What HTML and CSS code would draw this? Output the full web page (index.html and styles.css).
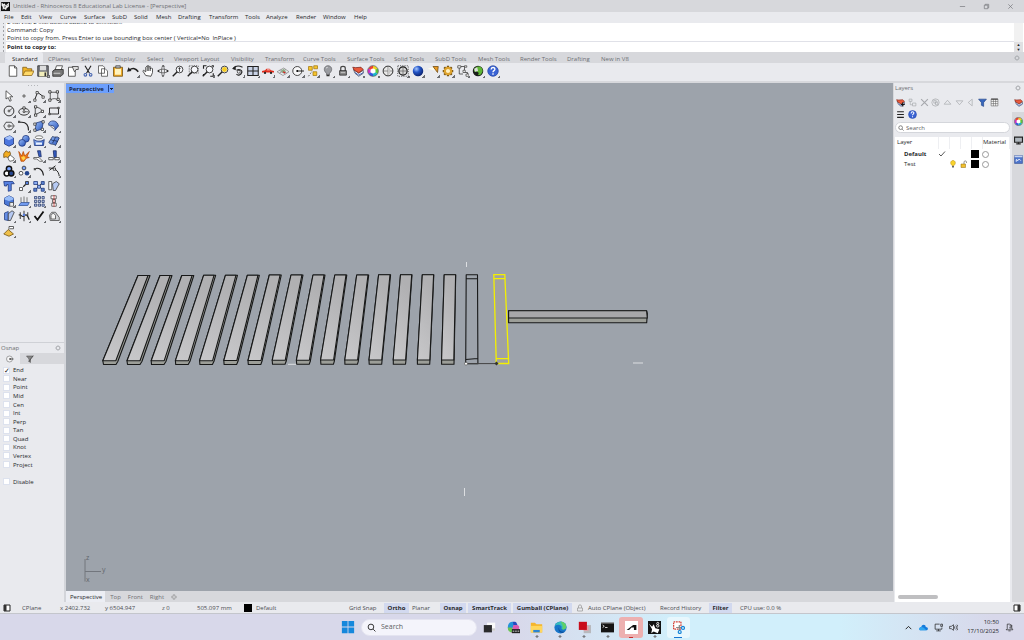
FILE: index.html
```html
<!DOCTYPE html>
<html lang="en">
<head>
<meta charset="utf-8">
<title>Untitled - Rhinoceros 8</title>
<link rel="stylesheet" href="styles.css">
</head>
<body>
<svg class="defs" aria-hidden="true">
  <linearGradient id="gBlue" x1="0" y1="0" x2="1" y2="1"><stop offset="0" stop-color="#9dc0fa"/><stop offset="1" stop-color="#2450b8"/></linearGradient>
  <radialGradient id="gBall" cx=".35" cy=".3" r=".8"><stop offset="0" stop-color="#a8c8ff"/><stop offset=".4" stop-color="#2456c8"/><stop offset="1" stop-color="#061a60"/></radialGradient>
  <symbol id="gear" viewBox="0 0 16 16"><circle cx="8" cy="8" r="4.500" fill="none" stroke="#aaacb0" stroke-width="2"/><path d="M8 0v3M8 13v3M0 8h3M13 8h3M2.500 2.500l2 2M11.500 11.500l2 2M2.500 13.500l2-2M11.500 4.500l2-2" stroke="#aaacb0" stroke-width="2"/></symbol>
  <symbol id="help" viewBox="0 0 16 16"><circle cx="8" cy="8" r="7" fill="#3a63d4" stroke="#2447a8"/><path d="M5.500 6c0-3.500 5-3.500 5-.5 0 2-2.500 2-2.500 4M8 11v2" fill="none" stroke="#fff" stroke-width="1.800"/></symbol>
  <symbol id="wheel" viewBox="0 0 16 16"><circle cx="8" cy="8" r="4" fill="#fff"/><g fill="none" stroke-width="3.600"><path d="M8 2.800a5.200 5.200 0 0 1 4.500 2.600" stroke="#f2d21c"/><path d="M12.500 5.400a5.200 5.200 0 0 1 0 5.200" stroke="#5cc83a"/><path d="M12.500 10.600A5.200 5.200 0 0 1 8 13.200" stroke="#18b8c8"/><path d="M8 13.200a5.200 5.200 0 0 1-4.500-2.600" stroke="#3058e0"/><path d="M3.500 10.600a5.200 5.200 0 0 1 0-5.200" stroke="#d030c8"/><path d="M3.500 5.400A5.200 5.200 0 0 1 8 2.800" stroke="#f04030"/></g><circle cx="8" cy="8" r="7.200" fill="none" stroke="#444" stroke-width=".8"/></symbol>
  <symbol id="layers" viewBox="0 0 16 16"><path d="M2 6l7 5 6-4v4l-6 4-5-4z" fill="#fff" stroke="#3a4055"/><path d="M4 10l5 3.500 6-3.500" fill="none" stroke="#3858b0" stroke-width="1.200"/><path d="M1 3l4 .5L12 3l3 3-6 4.500L3 7z" fill="#ea5a3c" stroke="#7c2218"/></symbol>
  <symbol id="lens" viewBox="0 0 16 16"><circle cx="10" cy="6" r="4.500" fill="#f5f6fa" stroke="#333" stroke-width="1.200"/><path d="M7 9l-6 6" stroke="#222" stroke-width="1.800"/></symbol>
  <symbol id="logo" viewBox="0 0 16 16"><path d="M0 0h16v16H0z" fill="#111"/><path d="M1 1l4 3 2-2 1 4 3-2 3-3v7l-4 3-1 3-4-2-2 2V9l-2-3z" fill="#f2f2f2"/><path d="M5 7l3 1-2 3M10 7l2-2" stroke="#111" fill="none"/></symbol>
</svg>

<header class="titlebar">
  <svg class="app-icon"><use href="#logo"/></svg>
  <h1 class="title">Untitled - Rhinoceros 8 Educational Lab License - [Perspective]</h1>
  <div class="window-buttons">
    <button aria-label="Minimise"><svg viewBox="0 0 16 16"><path d="M2 8h12"/></svg></button>
    <button aria-label="Restore"><svg viewBox="0 0 16 16"><path d="M3 5h8v8H3zM5 5V3h8v8h-2"/></svg></button>
    <button aria-label="Close"><svg viewBox="0 0 16 16"><path d="M3 3l10 10M13 3L3 13"/></svg></button>
  </div>
</header>

<nav class="menubar">
  <button>File</button><button>Edit</button><button>View</button><button>Curve</button><button>Surface</button><button>SubD</button><button>Solid</button><button>Mesh</button><button>Drafting</button><button>Transform</button><button>Tools</button><button>Analyze</button><button>Render</button><button>Window</button><button>Help</button>
</nav>

<section class="command">
  <div class="grip"></div>
  <div class="command-body">
    <div class="history">
      <p>2 curves, 2 extrusions added to selection.</p>
      <p>Command: Copy</p>
      <p>Point to copy from. Press Enter to use bounding box center ( Vertical=No&nbsp; InPlace )</p>
    </div>
    <label class="prompt">Point to copy to: <input type="text" aria-label="Command input"></label>
  </div>
  <div class="command-scroll"><span></span><button aria-label="Up">▲</button><button aria-label="Down">▼</button></div>
</section>

<nav class="tabs">
  <button class="active">Standard</button><button>CPlanes</button><button>Set View</button><button>Display</button><button>Select</button><button>Viewport Layout</button><button>Visibility</button><button>Transform</button><button>Curve Tools</button><button>Surface Tools</button><button>Solid Tools</button><button>SubD Tools</button><button>Mesh Tools</button><button>Render Tools</button><button>Drafting</button><button>New in V8</button>
  <button class="tab-options" aria-label="Options"><svg><use href="#gear"/></svg></button>
</nav>

<div class="toolbar">
  <button aria-label="New"><svg viewBox="0 0 16 16"><path d="M3 1h7l3 3v11H3z" fill="#fff" stroke="#333"/><path d="M10 1v3h3" fill="none" stroke="#333"/></svg></button>
  <button aria-label="Open"><svg viewBox="0 0 16 16"><path d="M1 14V3h5l1 2h6v3" fill="#f0b428" stroke="#7a5510"/><path d="M1 14l3-6h12l-3 6z" fill="#ffd968" stroke="#8a6015"/></svg></button>
  <button class="more" aria-label="Save"><svg viewBox="0 0 16 16"><path d="M1 1h14v14H1z" fill="#77797f" stroke="#222"/><path d="M4 1h8v6H4z" fill="#ddd"/><path d="M3 9h10v6H3z" fill="#f2eebb"/><path d="M10 10h2v5h-2z" fill="#333"/></svg></button>
  <button aria-label="Print"><svg viewBox="0 0 16 16"><path d="M4 7l2-6h8l-2 6" fill="#fff" stroke="#333"/><path d="M1 8l3-2h11v6l-3 3H1z" fill="#777" stroke="#222"/><path d="M2 11h9" stroke="#eee"/></svg></button>
  <button aria-label="Properties"><svg viewBox="0 0 16 16"><path d="M2 3h9v12H2z" fill="#fff" stroke="#333"/><path d="M7 2h8v4h-3l-2 3-1-2z" fill="#ddd" stroke="#333"/></svg></button>
  <button aria-label="Cut"><svg viewBox="0 0 16 16"><path d="M4 1l6 10M12 1L6 11" stroke="#222" stroke-width="1.500"/><circle cx="4.500" cy="13" r="1.800" fill="none" stroke="#4463b0" stroke-width="1.400"/><circle cx="11.500" cy="13" r="1.800" fill="none" stroke="#4463b0" stroke-width="1.400"/></svg></button>
  <button aria-label="Copy"><svg viewBox="0 0 16 16"><path d="M2 1h6l2 2v8H2zM6 5h5l3 3v7H6z" fill="#fff" stroke="#444"/></svg></button>
  <button aria-label="Paste"><svg viewBox="0 0 16 16"><path d="M2 3h12v12H2z" fill="#eda928" stroke="#6e4c0b"/><path d="M4 5h8v8H4z" fill="#fff3bd"/><path d="M5 1h6v3H5z" fill="#bbb" stroke="#444"/></svg></button>
  <button class="more" aria-label="Undo"><svg viewBox="0 0 16 16"><path d="M3 7c5-4 9-2 12 2" fill="none" stroke="#222" stroke-width="2"/><path d="M0 9l2-6 4 5z" fill="#222"/></svg></button>
  <button aria-label="Pan"><svg viewBox="0 0 16 16"><path d="M5 14L1 8l1-1 3 2V3l1-1 1 1V1h2v2l2-1v3l2-1 1 1v5l-2 5zM7 3v5M9 3v5M11 4v4" fill="#fff" stroke="#222"/></svg></button>
  <button aria-label="Rotate view"><svg viewBox="0 0 16 16"><ellipse cx="8" cy="8" rx="6" ry="2.500" fill="none" stroke="#555"/><ellipse cx="8" cy="8" rx="2" ry="6" fill="none" stroke="#555"/><path d="M6 2h5L8 0zM6 14h4l-2 2zM0 8l3-2v4zM16 8l-3-2v4z" fill="#222"/></svg></button>
  <button aria-label="Zoom dynamic"><svg viewBox="0 0 16 16"><use href="#lens"/><path d="M10 3v6M8.500 4.500h3" stroke="#222"/></svg></button>
  <button aria-label="Zoom window"><svg viewBox="0 0 16 16"><path d="M3 1h12v10H3z" fill="none" stroke="#444" stroke-dasharray="1.500"/><use href="#lens"/></svg></button>
  <button class="more" aria-label="Zoom extents"><svg viewBox="0 0 16 16"><use href="#lens"/><path d="M2 5V1h4M15 11v4h-4M13 1h2v2M2 12v2" fill="none" stroke="#222" stroke-width="1.500"/></svg></button>
  <button aria-label="Zoom selected"><svg viewBox="0 0 16 16"><use href="#lens"/><circle cx="10" cy="6" r="3.300" fill="#f6cc21"/></svg></button>
  <button class="more" aria-label="Undo view"><svg viewBox="0 0 16 16"><path d="M2 4c4-4 8-3 12-1M6 7c4-2 8 0 7 3s-5 5-7 2" fill="none" stroke="#222" stroke-width="1.500"/><path d="M0 5l5-4v6z" fill="#222"/><circle cx="9" cy="9" r="2" fill="none" stroke="#333"/></svg></button>
  <button class="more" aria-label="Viewports"><svg viewBox="0 0 16 16"><path d="M1 2h14v12H1z" fill="#c8d2e6" stroke="#222" stroke-width="1.400"/><path d="M8 2v12M1 8h14" stroke="#222" stroke-width="1.400"/></svg></button>
  <button class="more" aria-label="Named views"><svg viewBox="0 0 16 16"><path d="M0 10V8l4-1 2-2h4l2 2 4 1v2z" fill="#e02c1c"/><path d="M6 7l1-1h3l1 1z" fill="#fff"/><circle cx="4" cy="10.500" r="1.500" fill="#222"/><circle cx="12" cy="10.500" r="1.500" fill="#222"/></svg></button>
  <button class="more" aria-label="CPlane"><svg viewBox="0 0 16 16"><path d="M0 9l9-5 7 5-8 5zM3 7l8 5M5 6l8 5M3 11l9-5" fill="none" stroke="#888"/><path d="M5 8l4-3 3 4-4 2z" fill="#8cae86"/><path d="M8 9l3 1.500" stroke="#d22" stroke-width="1.500"/></svg></button>
  <button class="more" aria-label="Object snap"><svg viewBox="0 0 16 16"><circle cx="7" cy="8" r="6" fill="#f7f7f8" stroke="#444" stroke-width="1.300"/><path d="M7 8h9" stroke="#222" stroke-width="1.300"/><circle cx="7" cy="8" r="1.300"/></svg></button>
  <button class="more" aria-label="Select"><svg viewBox="0 0 16 16"><path d="M2 2h5v5H2zM9 1h5v4H9zM8 9h5v5H8z" fill="#f7c52c" stroke="#a47a12"/><path d="M2 15l5-7" stroke="#333" stroke-dasharray="2"/></svg></button>
  <button class="more" aria-label="Hide"><svg viewBox="0 0 16 16"><path d="M6 11C1 7 3 1 8 1s7 6 2 10v2H6z" fill="#9a9ca1" stroke="#606266"/><path d="M6 14h4" stroke="#333" stroke-width="2"/><path d="M5.500 4l2-1" stroke="#fff"/></svg></button>
  <button class="more" aria-label="Lock"><svg viewBox="0 0 16 16"><path d="M5 8V4c0-3 6-3 6 0v4" fill="none" stroke="#444" stroke-width="1.600"/><path d="M3.500 7.500h9v6h-9z" fill="#888" stroke="#222"/><path d="M5 10h6" stroke="#ccc"/></svg></button>
  <button class="more" aria-label="Layers"><svg><use href="#layers"/></svg></button>
  <button class="more" aria-label="Colour"><svg><use href="#wheel"/></svg></button>
  <button aria-label="Shade"><svg viewBox="0 0 16 16"><circle cx="8" cy="8" r="6.500" fill="#e8e8e8" stroke="#222" stroke-width="1.300"/><path d="M2 8h12M8 2v12" fill="none" stroke="#777"/><path d="M8 2c4 3 4 9 0 12" fill="#c6c6c6"/></svg></button>
  <button class="more" aria-label="Shade selected"><svg viewBox="0 0 16 16"><path d="M1 1h14v14H1z" fill="none" stroke="#333" stroke-dasharray="1.500"/><circle cx="8" cy="8" r="5.500" fill="#d4d4d4" stroke="#111" stroke-width="1.600"/><path d="M2 8h12M8 2v12" fill="none" stroke="#666"/></svg></button>
  <button class="more" aria-label="Render"><svg viewBox="0 0 16 16"><circle cx="8" cy="8" r="7" fill="url(#gBall)"/></svg></button>
  <button class="more" aria-label="Spotlight"><svg viewBox="0 0 16 16"><path d="M1 5l10-3 2 6z" fill="#fffbe8"/><path d="M8 2h7l-1 8z" fill="#eb9b22" stroke="#6b470d"/></svg></button>
  <button class="more" aria-label="Options"><svg viewBox="0 0 16 16"><path d="M8 1v14M1 8h14M3 3l10 10M3 13L13 3" stroke="#6e4b0c" stroke-width="3"/><circle cx="8" cy="8" r="4.300" fill="#fff0c0" stroke="#dda22c" stroke-width="3"/></svg></button>
  <button class="more" aria-label="History"><svg viewBox="0 0 16 16"><path d="M3 4v8h5M5 2h5v5M10 10h4v5" fill="none" stroke="#333"/><path d="M1 1h4v3H1zM10 1h3v2h-3zM8 7h3v3H8zM12 12h4v3h-4z" fill="#fff" stroke="#444"/></svg></button>
  <button class="more" aria-label="Grasshopper"><svg viewBox="0 0 16 16"><circle cx="8" cy="8" r="7" fill="#1b1f1b"/><path d="M8 2c4-1 7 3 6 7-2 5-5 5-6 4 3-3-2-5-5-4C2 5 4 3 8 2z" fill="#5fb636"/><path d="M3 5l4-2 1 5-4 1z" fill="#ddd"/></svg></button>
  <button class="more" aria-label="Help"><svg><use href="#help"/></svg></button>
</div>

<main class="workspace">
  <aside class="left">
    <div class="palette">
      <div class="palette-grip"></div>
      <div class="palette-grid">
        <button aria-label="Select"><svg viewBox="0 0 16 16"><path d="M4 1v11l3-2 2 5 2-1-2-5h4z" fill="#fff" stroke="#333"/></svg></button>
        <button class="more" aria-label="Point"><svg viewBox="0 0 16 16"><circle cx="8" cy="8" r="1.500" fill="#fff" stroke="#222"/></svg></button>
        <button class="more" aria-label="Polyline"><svg viewBox="0 0 16 16"><path d="M2 14L6 3l8 6" fill="none" stroke="#222" stroke-width="1.300"/><path d="M1 12h3v3H1zM4 2h3v3H4zM12 8h3v3h-3z" fill="#fff" stroke="#333"/></svg></button>
        <button class="more" aria-label="Curve"><svg viewBox="0 0 16 16"><path d="M2 3h11M3 3v10c4-2 7-2 10 0V3" fill="none" stroke="#333"/><path d="M1 1h3v3H1zM11 1h3v3h-3zM1 12h3v3H1zM12 11h3v3h-3z" fill="#fff" stroke="#222"/></svg></button>
        <button class="more" aria-label="Circle"><svg viewBox="0 0 16 16"><circle cx="8" cy="8" r="6.500" fill="none" stroke="#222" stroke-width="1.200"/><path d="M8 8l5-4" stroke="#333"/><circle cx="8" cy="8" r="1.300" fill="#fff" stroke="#222"/></svg></button>
        <button class="more" aria-label="Ellipse"><svg viewBox="0 0 16 16"><ellipse cx="8" cy="9" rx="7" ry="4.500" fill="none" stroke="#222" stroke-width="1.200"/><path d="M8 3v6h6" fill="none" stroke="#444"/><path d="M6.500 2.500h3v3h-3z" fill="#fff" stroke="#222"/><circle cx="8" cy="9" r="1.300" fill="#fff" stroke="#222"/></svg></button>
        <button class="more" aria-label="Arc"><svg viewBox="0 0 16 16"><path d="M3 3c5 0 8 2 10 6M3 3v10l10-5" fill="none" stroke="#222"/><path d="M2 1h3v3H2zM2 12h3v3H2zM11 7h3v3h-3z" fill="#fff" stroke="#222"/></svg></button>
        <button class="more" aria-label="Rectangle"><svg viewBox="0 0 16 16"><path d="M2 4h12v8H2z" fill="none" stroke="#222" stroke-width="1.200"/><path d="M1 11h2v2H1zM13 3h2v2h-2z" fill="#fff" stroke="#222"/></svg></button>
        <button class="more" aria-label="Polygon"><svg viewBox="0 0 16 16"><path d="M4 3h7l4 5-4 5H4L1 8z" fill="none" stroke="#222"/><circle cx="8" cy="8" r="1.500" fill="#fff" stroke="#222"/><path d="M9 8h5" stroke="#333"/></svg></button>
        <button class="more" aria-label="Fillet"><svg viewBox="0 0 16 16"><path d="M1 3h4c6 0 9 3 9 11" fill="none" stroke="#222" stroke-width="1.500"/><path d="M0 1h3v3H0z" fill="#555"/></svg></button>
        <button class="more" aria-label="Surface"><svg viewBox="0 0 16 16"><path d="M4 4l10-3-2 11-9 3z" fill="url(#gBlue)" stroke="#1b3474"/><path d="M1 4h3v3H1zM12 1h3v3h-3zM1 12h3v3H1zM11 11h3v3h-3z" fill="#fff" stroke="#333"/></svg></button>
        <button class="more" aria-label="Revolve"><svg viewBox="0 0 16 16"><path d="M1 4c4-5 12-3 13 4l-5 6c1-5-1-7-8-7z" fill="url(#gBlue)" stroke="#1b3474"/><path d="M3 8l5 4" stroke="#444"/></svg></button>
        <button class="more" aria-label="Box"><svg viewBox="0 0 16 16"><path d="M2 4l7-3 5 3v8l-6 3-6-3z" fill="#4c76df" stroke="#183078"/><path d="M2 4l7-3 5 3-6 3z" fill="#a5c2fb"/></svg></button>
        <button class="more" aria-label="Spheres"><svg viewBox="0 0 16 16"><circle cx="10.500" cy="5" r="4.500" fill="url(#gBlue)" stroke="#183078"/><circle cx="5.500" cy="10.500" r="4.500" fill="url(#gBlue)" stroke="#183078"/></svg></button>
        <button class="more" aria-label="Pipe"><svg viewBox="0 0 16 16"><ellipse cx="8" cy="3" rx="5" ry="2" fill="#fff" stroke="#555"/><path d="M1 6c4 3 10 3 14 0l-1 8H2z" fill="url(#gBlue)" stroke="#183078"/><path d="M4 10h8v3H4z" fill="#eaf2ff"/></svg></button>
        <button class="more" aria-label="Patch"><svg viewBox="0 0 16 16"><path d="M1 10l5-8c3 2 6-1 9 2l-5 10c-3-3-5 0-9-4z" fill="url(#gBlue)" stroke="#1b2c55"/><path d="M4 6c3 3 5 0 9 3M10 3L6 11" stroke="#1b2c55" fill="none"/></svg></button>
        <button class="more" aria-label="Boolean"><svg viewBox="0 0 16 16"><path d="M1 5l3-4 3 2 2-1 1 3-1 3-3 2-2-1-3 1z" fill="#f3ad22" stroke="#6f4807"/><path d="M7 9l3-2 5 4-1 3-5 1-2-3z" fill="#fff" stroke="#444"/></svg></button>
        <button aria-label="Explode"><svg viewBox="0 0 16 16"><path d="M1 2l4 6 2-6 2 6 6-6-3 7 3 1-4 1-3 4H4z" fill="#ef7c16" stroke="#b84a08"/><path d="M4 10l4-2 2 3-3 3z" fill="#ffd348"/></svg></button>
        <button class="more" aria-label="Trim"><svg viewBox="0 0 16 16"><path d="M6 1h4l1 8H8z" fill="#355cc0" stroke="#172a60"/><path d="M1 10h7l5 5h-4l-4-3H1z" stroke="#444" fill="#fff"/></svg></button>
        <button class="more" aria-label="Split"><svg viewBox="0 0 16 16"><path d="M7 1h4v9H8z" fill="#355cc0" stroke="#172a60"/><path d="M1 10h6v3H1zM9 10h6v3H9z" fill="#fff" stroke="#333"/></svg></button>
        <button class="more" aria-label="Group"><svg viewBox="0 0 16 16"><g stroke="#111" stroke-width="2"><circle cx="8" cy="5" r="3.500" fill="#80a8ff"/><circle cx="5" cy="11" r="3.500" fill="#fff"/><circle cx="11" cy="11" r="3.500" fill="#24458e"/></g></svg></button>
        <button class="more" aria-label="Ungroup"><svg viewBox="0 0 16 16"><circle cx="8" cy="4" r="2.500" fill="#80a8ff" stroke="#222"/><circle cx="4" cy="11" r="2.500" fill="#fff" stroke="#222"/><circle cx="12" cy="11" r="3" fill="#24458e"/></svg></button>
        <button aria-label="Edit curve"><svg viewBox="0 0 16 16"><path d="M2 5c6-2 11 1 12 9" fill="none" stroke="#222" stroke-width="1.500"/><path d="M1 4h3v3H1z" fill="#555"/></svg></button>
        <button class="more" aria-label="Extend curve"><svg viewBox="0 0 16 16"><path d="M1 4c8 0 13 3 14 11M2 7l8-6" fill="none" stroke="#222" stroke-width="1.300"/><path d="M7 4h3v3H7z" fill="#fff" stroke="#222"/></svg></button>
        <button aria-label="Text"><svg viewBox="0 0 16 16"><path d="M1 2h12l2 3h-4v9l-4 1V6H5v2H2z" fill="#5580e2" stroke="#183078"/></svg></button>
        <button class="more" aria-label="Move"><svg viewBox="0 0 16 16"><path d="M2 10h4v4H2z" fill="#fff" stroke="#333"/><path d="M10 2h4v4h-4z" fill="#537ddd" stroke="#222"/><path d="M7 9l3-3" stroke="#222" stroke-width="1.500"/></svg></button>
        <button class="more" aria-label="Copy objects"><svg viewBox="0 0 16 16"><path d="M5 5l7 7M4 12l8-8" stroke="#222"/><path d="M1 2h5v4H1zM6 7h4v4H6z" fill="#8bacf3" stroke="#1a347a"/><path d="M11 2h4v4h-4zM1 11h4v4H1zM11 11h4v4h-4z" fill="#5b82cf" stroke="#1a347a"/></svg></button>
        <button aria-label="Rotate"><svg viewBox="0 0 16 16"><path d="M1 2h4v11H1z" fill="#fff" stroke="#333"/><path d="M6 5l5-3 4 3-5 9H7z" fill="#b7cbf4" stroke="#333"/></svg></button>
        <button class="more" aria-label="Solid"><svg viewBox="0 0 16 16"><path d="M2 4l6-3 6 3v8l-6 3-6-3z" fill="#4b78d7" stroke="#183078"/><path d="M2 4l6-3 6 3v2l-6 2-6-2z" fill="#98bdf8"/><path d="M9 10h5v5H9z" fill="#eee" stroke="#444"/></svg></button>
        <button class="more" aria-label="Extrude"><svg viewBox="0 0 16 16"><path d="M1 14l3-4h11l-2 4z" fill="#719bf0" stroke="#315297"/><path d="M4 10V3M8 10V2M12 10V3" fill="none" stroke="#555"/></svg></button>
        <button class="more" aria-label="Array"><svg viewBox="0 0 16 16"><g fill="#b9caed" stroke="#26386a"><path d="M2 2h3v3H2zM7 2h3v3H7zM12 2h3v3h-3zM2 7h3v3H2zM7 7h3v3H7zM12 7h3v3h-3zM2 12h3v3H2zM7 12h3v3H7zM12 12h3v3h-3z"/></g></svg></button>
        <button class="more" aria-label="Align"><svg viewBox="0 0 16 16"><path d="M4 1h7v4H4zM6 6h4v4H6zM5 11h6v4H5z" fill="#fff" stroke="#444"/><path d="M8 0v16" stroke="#c93432"/></svg></button>
        <button class="more" aria-label="Bend"><svg viewBox="0 0 16 16"><path d="M2 4l5-2v12l-5-1z" fill="#658ee6" stroke="#213b7b"/><path d="M7 5l5-4 3 2-5 11H7z" fill="#b5c8f2" stroke="#333"/></svg></button>
        <button class="more" aria-label="Edit points"><svg viewBox="0 0 16 16"><path d="M1 7c3-3 4 4 7 1s4-2 7 5" fill="none" stroke="#222" stroke-width="1.500"/><path d="M8 1v14M3 3v9M13 3v6" stroke="#333" stroke-width="1.300"/><path d="M6.500 5h3v3h-3z" fill="#557de0"/></svg></button>
        <button class="more" aria-label="Check"><svg viewBox="0 0 16 16"><path d="M2 8l4 5L14 2" fill="none" stroke="#111" stroke-width="2.400"/></svg></button>
        <button class="more" aria-label="Clip"><svg viewBox="0 0 16 16"><path d="M2 7l3-4h5l5 7v4H3z" fill="#d1d3d7" stroke="#444"/><path d="M4 12V7l3-3 3 3v5z" fill="#f5f5f5" stroke="#444"/></svg></button>
        <button class="more" aria-label="Cone"><svg viewBox="0 0 16 16"><path d="M1 12l6-6 7 6-6 3z" fill="#efc04a" stroke="#6b4b0b"/><path d="M8 6V2h6v3H9" fill="#fff" stroke="#333"/></svg></button>
      </div>
    </div>
    <section class="osnap">
      <header class="panel-head"><h2>Osnap</h2><svg><use href="#gear"/></svg></header>
      <div class="osnap-tabs">
        <button class="active" aria-label="Snaps"><svg viewBox="0 0 16 16"><circle cx="7" cy="8" r="6" fill="#f5f5f6" stroke="#555"/><path d="M8 8h7" stroke="#222" stroke-width="1.500"/><circle cx="8" cy="8" r="1.500"/></svg></button>
        <button aria-label="Filter"><svg viewBox="0 0 16 16"><path d="M1 2h13L9 8v7l-3-2V8z" fill="#888" stroke="#444"/><path d="M15 1L5 14" stroke="#333"/></svg></button>
      </div>
      <div class="snap-list">
        <label><input type="checkbox" checked>End</label>
        <label><input type="checkbox">Near</label>
        <label><input type="checkbox">Point</label>
        <label><input type="checkbox">Mid</label>
        <label><input type="checkbox">Cen</label>
        <label><input type="checkbox">Int</label>
        <label><input type="checkbox">Perp</label>
        <label><input type="checkbox">Tan</label>
        <label><input type="checkbox">Quad</label>
        <label><input type="checkbox">Knot</label>
        <label><input type="checkbox">Vertex</label>
        <label><input type="checkbox">Project</label>
        <label class="disable"><input type="checkbox">Disable</label>
      </div>
    </section>
  </aside>

  <section class="center">
    <div class="viewport">
      <button class="view-title"><span>Perspective</span><i></i></button>
      <svg class="scene" viewBox="66 83 827 508" preserveAspectRatio="xMinYMin meet">
        <defs><linearGradient id="gTop" x1="0" y1="1" x2=".3" y2="0"><stop offset="0" stop-color="#c8c8ca"/><stop offset="1" stop-color="#b0b0b2"/></linearGradient></defs>
        <path class="tick" d="M466.500 262v5M464.500 488v8M633 363h10M288 364.300h9"/>
        <g class="bars">
          <path class="side" d="M138 275.500h12L117.800 361.500 116 364.500h-12.500L102.800 360.700z"/><path class="top" d="M138 275.500h10L115.800 360.700h-13z"/>
          <path class="side" d="M160 275.500h12L141.900 361.500 140 364.500h-12.500L127 360.700z"/><path class="top" d="M160 275.500h10.100L140 360.700h-13z"/>
          <path class="side" d="M181.800 275.500h12L165.900 361.500 164 364.500h-12.500L151.200 360.700z"/><path class="top" d="M181.800 275.500h10.300L164.200 360.700h-13z"/>
          <path class="side" d="M203.700 275.200h12L190 361.300 188.200 364.500h-12.500L175.400 360.700z"/><path class="top" d="M203.700 275.200h10.400L188.400 360.700h-13z"/>
          <path class="side" d="M225.500 275.200h12L214 361.300 212.400 364.500h-12.500L199.600 360.700z"/><path class="top" d="M225.500 275.200h10.500L212.600 360.700h-13z"/>
          <path class="side" d="M247.400 275.200h12L238 361.300 236.600 364.500h-12.500L223.800 360.500z"/><path class="top" d="M247.400 275.200h10.600L236.800 360.500h-13z"/>
          <path class="side" d="M269.300 275h12L262 361.300 260.800 364.500h-12.500L248 360.500z"/><path class="top" d="M269.300 275h10.800L261 360.500h-13z"/>
          <path class="side" d="M291 275h12L286.200 361.300 285 364.300h-12.500L272.200 360.300z"/><path class="top" d="M291 275h10.900L285.200 360.300h-13z"/>
          <path class="side" d="M313 275h12L310.300 361.300 309.200 364.300h-12.500L296.400 360.200z"/><path class="top" d="M313 275h11L309.400 360.200h-13z"/>
          <path class="side" d="M334.800 275h12L334.300 361.300 333.400 364.300h-12.500L320.600 360z"/><path class="top" d="M334.800 275h11.200L333.600 360h-13z"/>
          <path class="side" d="M356.700 275h12L358.300 361.300 357.400 364.300h-12.500L344.800 360z"/><path class="top" d="M356.700 275h11.300L357.600 360h-12.800z"/>
          <path class="side" d="M378.600 274.800h12L382 361 381.700 364.300h-12.500L369 360z"/><path class="top" d="M378.600 274.800h11.400L381.700 360h-12.700z"/>
          <path class="side" d="M400.500 274.800h11.500L405.900 361 405.500 364.200h-12.200V360z"/><path class="top" d="M400.500 274.800h11.200L405.600 360h-12.400z"/>
          <path class="side" d="M422.300 274.800h11.500L429.900 361 429.700 364.200h-12.300V360z"/><path class="top" d="M422.300 274.800h11.300L429.800 360h-12.400z"/>
          <path class="side" d="M444.200 274.700h11.500L454 364.200h-12.400V360z"/><path class="top" d="M444.200 274.700h11.400L453.800 360h-12.200z"/>
          <path class="wire" d="M466.200 274.700h11.300l.4 89H465.700zM466.200 278.700h11.400M465.700 359.500l12-1"/>
          <path class="side" d="M508.600 310.700h138l.7 3-.6 9H508.600z"/><path class="long" d="M508.600 310.700h138l.7 7.300H508.600z"/>
        </g>
        <path d="M494 274.700h10.800l4 88.800H496.200z" fill="#a0a1a4"/>
        <path d="M466 363.600h30" stroke="#444"/>
        <path class="selected" d="M493.800 274.700h11l3.900 88.800H496.300zM494 278.700h11M496.200 358.700h12.200"/>
        <circle cx="466" cy="363.700" r="1.500" fill="#fff" stroke="#444" stroke-width=".6"/><path d="M494.500 363.600l2-2 2 2-2 2z" fill="#333"/>
        <path class="axis" d="M85 559v22.500M85 571.500h16"/>
        <text x="86" y="560">z</text><text x="102" y="572">y</text><text x="86" y="582">x</text>
      </svg>
    </div>
    <nav class="view-tabs"><button class="active">Perspective</button><button>Top</button><button>Front</button><button>Right</button><button aria-label="Add view"><svg viewBox="0 0 16 16"><path d="M6 6V2h4v4h4v4h-4v4H6v-4H2V6z" fill="none" stroke="#888" stroke-width="1.500"/></svg></button></nav>
  </section>

  <aside class="right">
    <section class="layers">
      <header class="panel-head"><h2>Layers</h2></header>
      <div class="layer-tools">
        <button aria-label="New layer"><svg viewBox="0 0 16 16"><use href="#layers"/><path d="M12 8v7M8.500 11.500h7" stroke="#111" stroke-width="2"/></svg></button>
        <button class="dim" aria-label="New sublayer"><svg viewBox="0 0 16 16"><path d="M2 2h5v4H2zM4 6v6h4M8 9h6v5H8z"/></svg></button>
        <button class="dim" aria-label="Delete"><svg viewBox="0 0 16 16"><path d="M2 2l12 12M14 2L2 14" stroke-width="2"/></svg></button>
        <button class="dim" aria-label="Duplicate"><svg viewBox="0 0 16 16"><circle cx="8" cy="8" r="6.500"/><path d="M5 4h4v5H5zM8 7h4v5H8z"/></svg></button>
        <button class="dim" aria-label="Up"><svg viewBox="0 0 16 16"><path d="M2 11h12L8 4z"/></svg></button>
        <button class="dim" aria-label="Down"><svg viewBox="0 0 16 16"><path d="M2 5h12l-6 7z"/></svg></button>
        <button class="dim" aria-label="Left"><svg viewBox="0 0 16 16"><path d="M11 2v12L4 8z"/></svg></button>
        <button aria-label="Filter"><svg viewBox="0 0 16 16"><path d="M1 2h14l-5 6v7l-4-2V8z" fill="#3766bd" stroke="#183a7d"/></svg></button>
        <button aria-label="Columns"><svg viewBox="0 0 16 16"><path d="M2 2h12v12H2zM2 6h12M2 10h12M6 2v12M10 2v12" fill="#fff" stroke="#555"/><path d="M2 1h12v2H2z" fill="#444"/></svg></button>
        <button aria-label="Menu"><svg viewBox="0 0 16 16"><path d="M2 3h12M2 8h12M2 13h12" stroke="#222" stroke-width="2"/></svg></button>
        <button aria-label="Help"><svg><use href="#help"/></svg></button>
      </div>
      <label class="search"><svg viewBox="0 0 16 16"><circle cx="7" cy="7" r="5" fill="none" stroke="#333" stroke-width="1.500"/><path d="M11 11l4 4" stroke="#333" stroke-width="1.500"/></svg><input type="search" placeholder="Search" aria-label="Search layers"></label>
      <div class="layer-body">
        <table>
          <colgroup><col class="c-name"><col class="c-icon"><col class="c-icon"><col class="c-icon"><col class="c-icon"><col></colgroup>
          <thead><tr><th>Layer</th><th></th><th></th><th></th><th></th><th class="mat">Material</th></tr></thead>
          <tbody>
            <tr><td class="current">Default</td><td><svg viewBox="0 0 16 16"><path d="M2 8l4 4 8-9" fill="none" stroke="#222" stroke-width="1.500"/></svg></td><td></td><td></td><td><span class="swatch"></span></td><td><span class="ring"></span></td></tr>
            <tr><td>Test</td><td></td><td><svg viewBox="0 0 16 16"><path d="M6 11C1 6 4 1 8 1s7 5 2 10z" fill="#f8d32c" stroke="#b48508"/><path d="M6 12h4v3H6z" fill="#666"/></svg></td><td><svg viewBox="0 0 16 16"><path d="M8 8V4c0-3 5-3 5 0v2" fill="none" stroke="#777" stroke-width="1.500"/><path d="M2 8h9v7H2z" fill="#f2c02c" stroke="#8b6913"/></svg></td><td><span class="swatch"></span></td><td><span class="ring"></span></td></tr>
          </tbody>
        </table>
        <div class="hscroll"></div>
      </div>
    </section>
    <nav class="side-tabs">
      <svg class="side-gear"><use href="#gear"/></svg>
      <button class="active" aria-label="Layers"><svg><use href="#layers"/></svg></button>
      <button aria-label="Materials"><svg><use href="#wheel"/></svg></button>
      <button aria-label="Display"><svg viewBox="0 0 16 16"><path d="M1 2h14v9H1z" fill="#aeb6bd" stroke="#222" stroke-width="2"/><path d="M8 11v3M4 14h8" stroke="#222" stroke-width="2"/></svg></button>
      <button aria-label="Help panel"><svg viewBox="0 0 16 16"><path d="M1 1h14v14H1z" fill="#4d75cc" stroke="#2b468c"/><path d="M1 1h14v3H1z" fill="#c7d4ef"/><path d="M4 12V8l3 2 2-3 3 3" fill="none" stroke="#fff" stroke-width="1.500"/></svg></button>
    </nav>
  </aside>
</main>

<footer class="status">
  <button class="pane" aria-label="Left sidebar"><svg viewBox="0 0 16 16"><path d="M2 2h12v12H2z" fill="#fff" stroke="#222" stroke-width="2"/><path d="M2 2h5v12H2z" fill="#333"/></svg></button>
  <span>CPlane</span><span>x 2402.732</span><span>y 6504.947</span><span>z 0</span><span>505.097 mm</span>
  <span class="layer"><i class="swatch"></i>Default</span>
  <button>Grid Snap</button><button class="on">Ortho</button><button>Planar</button><button class="on">Osnap</button><button class="on">SmartTrack</button><button class="on">Gumball (CPlane)</button>
  <button class="auto"><svg viewBox="0 0 16 16"><path d="M5 8V4c0-3 6-3 6 0v4M3 8h10v6H3z" fill="none" stroke="#999" stroke-width="1.500"/></svg>Auto CPlane (Object)</button>
  <button>Record History</button><button class="on">Filter</button><span class="cpu">CPU use: 0.0 %</span>
  <button class="pane" aria-label="Right sidebar"><svg viewBox="0 0 16 16"><path d="M2 2h12v12H2z" fill="#fff" stroke="#222" stroke-width="2"/><path d="M9 2h5v12H9z" fill="#333"/></svg></button>
</footer>

<footer class="taskbar">
  <div class="task-center">
    <button class="start" aria-label="Start"><svg viewBox="0 0 16 16"><path d="M1 1h6.500v6.500H1zM8.500 1H15v6.500H8.500zM1 8.500h6.500V15H1zM8.500 8.500H15V15H8.500z" fill="#1688dc"/></svg></button>
    <label class="task-search"><svg viewBox="0 0 16 16"><circle cx="7" cy="7" r="5" fill="none" stroke="#222" stroke-width="1.600"/><path d="M11 11l4 4" stroke="#222" stroke-width="1.600"/></svg><input type="search" placeholder="Search" aria-label="Search Windows"></label>
    <div class="apps">
      <button aria-label="Task view"><svg viewBox="0 0 16 16"><path d="M5 2h10v10H5z" fill="#fafafa"/><path d="M1 5h10v9H1z" fill="#2a2a2c"/><path d="M11 12h4V9h-4z" fill="#ccc"/></svg></button>
      <button aria-label="Copilot"><svg viewBox="0 0 16 16"><path d="M1 8c0-4 2-7 6-7l2 4-4 7C2 12 1 10 1 8z" fill="#2493d8"/><path d="M7 1h3c2 0 2 3 3 4H8z" fill="#244bc0"/><path d="M8 5h5c3 1 2 4 1 7L9 14H5z" fill="#d95bb0"/><path d="M1 8h5l2 4-3 2c-3-1-4-3-4-6z" fill="#6cc451"/><path d="M6 10h10v5H6z" fill="#222"/><path d="M7 12.500h8" stroke="#fff" stroke-dasharray="2 1"/></svg></button>
      <button class="running" aria-label="Explorer"><svg viewBox="0 0 16 16"><path d="M1 14V2h5l2 2h7v10z" fill="#f5b52d"/><path d="M1 6h14v8H1z" fill="#ffd75e"/><path d="M4 11h8v3H4z" fill="#2b84d2"/></svg></button>
      <button class="running" aria-label="Edge"><svg viewBox="0 0 16 16"><circle cx="8" cy="8" r="7.500" fill="#1876c9"/><path d="M1 6c2-7 14-7 14 1 0 4-5 4-6 2 2-4-4-6-8-3z" fill="#36bdbd"/><path d="M8 1c5 0 7 3 7 6 0 3-3 4-5 3 2-3 0-6-2-9z" fill="#5fcf6a"/><path d="M6 8c0 4 3 6 8 5-5 4-10 0-8-5z" fill="#0e4f9c"/></svg></button>
      <button class="running" aria-label="Remote"><svg viewBox="0 0 16 16"><path d="M7 5h9v10H7z" fill="#b8b9bd"/><path d="M1 1h10v10H1z" fill="#c90c1b"/><path d="M11 6h2v6H7v-1h4z" fill="#e5a0a6"/></svg></button>
      <button class="running" aria-label="Terminal"><svg viewBox="0 0 16 16"><path d="M0 2h16v12H0z" fill="#151515"/><path d="M0 2h16v1H0z" fill="#aaa"/><path d="M2 5l2 1.500L2 8M5 8h3" fill="none" stroke="#fff"/></svg></button>
      <button class="running alert" aria-label="Autodesk"><svg viewBox="0 0 16 16"><path d="M0 0h16v16H0z" fill="#fff"/><path d="M2 11l8-6h4v6h-3V8H8l-3 3z" fill="#111"/></svg></button>
      <button class="running" aria-label="Rhino 8"><svg viewBox="0 0 16 16"><path d="M0 0h16v16H0z" fill="#111"/><path d="M1 3l4 4 2-3 2 5 5 1-2 5-5-2-3 2 1-5z" fill="#fff"/><circle cx="12" cy="3" r="1.300" fill="none" stroke="#fff"/><circle cx="12" cy="6" r="1.500" fill="none" stroke="#fff"/></svg></button>
      <button class="running focused" aria-label="Snipping Tool"><svg viewBox="0 0 16 16"><path d="M2 1h9v9H2z" fill="#fff" stroke="#d33c32" stroke-width="1.500" stroke-dasharray="2 1"/><path d="M9 5v7M5 8h7" stroke="#888" stroke-width="1.500"/><circle cx="13.500" cy="8.500" r="1.800" fill="none" stroke="#1684d8" stroke-width="1.500"/><circle cx="9.500" cy="13.500" r="1.800" fill="none" stroke="#1684d8" stroke-width="1.500"/></svg></button>
    </div>
  </div>
  <div class="tray">
    <button aria-label="Hidden icons"><svg viewBox="0 0 16 16"><path d="M3 11l5-5 5 5" fill="none" stroke="#222" stroke-width="1.700"/></svg></button>
    <button class="cloud" aria-label="OneDrive"><svg viewBox="0 0 16 16"><path d="M3 13C-1 13 0 7 4 7c1-5 8-5 8 0 5 0 5 6 1 6z" fill="#137bdc"/><path d="M4 7c3 0 6 2 9 6H3c-4 0-3-6 1-6z" fill="#32a7f0"/></svg></button>
    <button aria-label="Network"><svg viewBox="0 0 16 16"><path d="M10 2H2v9h12V8M8 11v3M4 14h8M12 2h3v4h-3z" fill="none" stroke="#222" stroke-width="1.300"/></svg></button>
    <button aria-label="Volume"><svg viewBox="0 0 16 16"><path d="M1 6h3l4-3v10l-4-3H1zM10 6v4M12 4.500c2 2 2 5 0 7M14 3c3 3 3 7 0 10" fill="none" stroke="#222" stroke-width="1.200"/></svg></button>
    <button class="clock"><time>10:50</time><time>17/10/2025</time></button>
    <button aria-label="Notifications"><svg viewBox="0 0 16 16"><path d="M2 12h12l-2-3V4L8 2H4v8zM6 14h4M8 5h4l-4 4h4" fill="none" stroke="#222" stroke-width="1.200"/></svg></button>
  </div>
</footer>
</body>
</html>
```
FILE: styles.css
```css
* { box-sizing: border-box; }
body {
  margin: 0;
  height: 100vh;
  display: flex;
  flex-direction: column;
  overflow: hidden;
  background: #e9eaee;
  color: #26272a;
  font: 6px/8px "Open Sans", "Noto Sans", sans-serif;
}
button, input { font: inherit; color: inherit; border: 0; margin: 0; padding: 0; background: none; }
button { display: flex; align-items: center; white-space: nowrap; text-align: left; }
input { min-width: 0; outline: 0; }
svg { display: block; flex: none; width: 12px; height: 12px; }
h1, h2, p { margin: 0; font: inherit; }
.defs { position: absolute; width: 0; height: 0; }

.titlebar { display: flex; align-items: center; gap: 3px; height: 12px; flex: none; padding: 0 2px 0 1px; background: #d7d8dc; color: #6d6f73; }
.app-icon { width: 9px; height: 9px; }
.title { flex: 1; }
.window-buttons { display: flex; }
.window-buttons button { width: 24px; height: 12px; justify-content: center; }
.window-buttons svg { width: 7px; height: 7px; fill: none; stroke: #77797d; stroke-width: 1.600; }

.menubar { display: grid; grid-template-columns: 17px 18px 21px 24px 28px 22px 22px 22px 31px 36px 21px 30px 27px 31px 30px; height: 11px; flex: none; padding: 0 0 2px 4px; }

.command { display: flex; height: 29px; flex: none; background: #fff; }
.grip { width: 6px; background: radial-gradient(#a0a2a6 1px, transparent 1px) 2px 10px / 3px 4px repeat-y, #e9eaee; }
.command-body { flex: 1; display: flex; flex-direction: column; }
.history { height: 19px; display: flex; flex-direction: column; justify-content: flex-end; overflow: hidden; padding: 0 1px; border-bottom: 1px solid #e0e1e8; }
.history p { flex: none; }
.history p:last-child { margin-bottom: -1px; }
.prompt { flex: 1; display: flex; align-items: center; gap: 3px; padding: 0 0 1px 1px; font-weight: 700; }
.prompt input { flex: 1; }
.command-scroll { width: 10px; display: flex; flex-direction: column; background: #fff; padding-right: 1px; }
.command-scroll span { flex: 1; background: #f1f1f1; }
.command-scroll button { height: 5px; justify-content: center; font-size: 4px; background: #e0e0e2; }

.tabs { display: grid; grid-template-columns: 38px 33px 34px 32px 27px 57px 34px 38px 44px 47px 41px 43px 42px 47px 34px 34px 1fr; height: 11px; flex: none; padding-left: 5px; background: #d7d8dc; color: #6d6f73; }
.tabs button { padding: 2px 5px 0; }
.tabs .active { background: #e9eaee; color: #26272a; padding-left: 7px; border-radius: 2px 2px 0 0; }
.tabs .tab-options { justify-content: flex-end; padding: 0 4px; }
.tab-options svg { width: 6px; height: 6px; }

.toolbar { display: flex; height: 20px; flex: none; padding: 0 0 4px 5px; border-bottom: 2px solid #d7d8dc; }
.toolbar button, .palette-grid button { width: 15px; height: 15px; justify-content: center; }
.more { background: linear-gradient(135deg, transparent 50%, #6b6d71 50%) right bottom / 3px 3px no-repeat; }

.workspace { flex: 1; min-height: 0; display: flex; }
.left { width: 66px; flex: none; display: flex; flex-direction: column; border-right: 2px solid #d3d5da; }
.palette { flex: 1; }
.palette-grip { height: 5px; width: 38px; padding: 1px 0 1px 26px; background: radial-gradient(#b4b6ba 1px, transparent 1px) 24px 1px / 3px 3px; background-clip: content-box; }
.palette-grid { display: grid; grid-template-columns: repeat(4, 15px); padding-left: 1px; }
.osnap { height: 260px; border-top: 1px solid #cfd1d6; }
.panel-head { display: flex; align-items: center; justify-content: space-between; height: 10px; color: #6d6f73; padding: 0 3px 0 1px; }
.panel-head svg { width: 6px; height: 6px; }
.osnap-tabs { display: flex; height: 11px; background: #d7d8dc; }
.osnap-tabs button { width: 20px; justify-content: center; }
.osnap-tabs .active { background: #e9eaee; }
.osnap-tabs svg { width: 8px; height: 8px; }
.snap-list { display: grid; grid-template-rows: repeat(14, 1fr); height: 122px; padding-top: 2px; }
.snap-list label { display: flex; align-items: center; gap: 3px; min-height: 0; }
.snap-list .disable { grid-row: 14; }
.snap-list input { appearance: none; width: 7px; height: 7px; margin-left: 3px; background: #fff; border: 1px solid #dde2ee; display: grid; place-items: center; }
.snap-list input:checked::before { content: "✓"; font: bold 7px/7px "DejaVu Sans", sans-serif; color: #111; }

.center { flex: 1; min-width: 0; display: flex; flex-direction: column; }
.viewport { flex: 1; min-height: 0; position: relative; background: #9da3ab; overflow: hidden; }
.view-title { position: absolute; top: 1px; left: 0; height: 9px; padding-left: 3px; gap: 4px; background: #6c9ffc; color: #16233f; font-weight: 700; }
.view-title i { width: 6px; height: 7px; border-left: 1px solid #26468b; background: linear-gradient(#16233f, #16233f) 1px 3px / 3px 1px no-repeat, linear-gradient(#16233f, #16233f) 2px 4px / 1px 1px no-repeat; }
.scene { width: 100%; height: 100%; font: 7px "Open Sans", sans-serif; fill: #62666d; }
.bars path { stroke: #171818; stroke-width: 1.100; stroke-linejoin: round; }
.bars .side { fill: #9c9e98; }
.bars .top { fill: url(#gTop); }
.bars .wire { fill: none; }
.bars .long { fill: #a7a7a9; }
.tick { stroke: #dcdee1; }
.axis { stroke: #72767d; }
.selected { fill: none; stroke: #f4f000; stroke-width: 1.300; }
.view-tabs { display: flex; height: 11px; flex: none; background: #d7d8dc; color: #6d6f73; gap: 7px; }
.view-tabs .active { background: #eceef4; color: #26272a; padding: 0 3px 0 4px; margin-right: -2px; }
.view-tabs svg { width: 6px; height: 6px; }

.right { width: 131px; flex: none; display: flex; border-left: 1px solid #d7d8dc; }
.layers { flex: 1; min-width: 0; display: flex; flex-direction: column; padding-left: 1px; }
.layers .panel-head { padding-left: 0; }
.layer-tools { display: grid; grid-template-columns: repeat(9, 1fr); grid-auto-rows: 12px; padding: 3px 12px 0 0; }
.layer-tools button { justify-content: center; }
.layer-tools svg { width: 9px; height: 9px; }
.dim svg { fill: none; stroke: #a6a8ac; stroke-width: 1.200; }
.search { display: flex; align-items: center; gap: 2px; height: 11px; margin: 2px 2px 4px 0; padding: 0 2px; border: 1px solid #d4d6db; border-radius: 6px; background: #fff; }
.search svg { width: 6px; height: 6px; }
.search input, .task-search input { flex: 1; width: 0; }
input::placeholder { color: #5c5e62; opacity: 1; }
.layer-body { flex: 1; display: flex; flex-direction: column; justify-content: space-between; background: #fff; margin-right: 2px; }
table { width: 100%; border-collapse: collapse; table-layout: fixed; }
.c-name { width: 43px; }
.c-icon { width: 11px; }
th { height: 12px; padding: 0 0 2px 2px; text-align: left; font-weight: 400; border-right: 1px solid #eeeff2; }
th.mat { padding: 0 3px 2px 0; text-align: right; }
td { height: 10px; padding: 0; }
td:first-child { padding-left: 9px; }
td svg { width: 8px; height: 8px; }
.current { font-weight: 700; }
.swatch { display: block; width: 8px; height: 8px; background: #000; }
.ring { display: block; width: 7px; height: 7px; border: 1px solid #999; border-radius: 50%; }
.hscroll { width: 40px; height: 4px; margin: 0 0 3px 3px; border-radius: 2px; background: #bfbfc1; }
.side-tabs { width: 12px; background: #d7d8dc; display: flex; flex-direction: column; }
.side-tabs .side-gear { width: 12px; height: 10px; padding: 2px 3px; background: #e9eaee; }
.side-tabs button { height: 19px; justify-content: center; }
.side-tabs .active { background: #e9eaee; }
.side-tabs button svg { width: 9px; height: 9px; }

.status { display: grid; grid-template-columns: 22px 38px 45px 57px 35px 47px 102px 38px 25px 31px 26px 45px 61px 85px 52px 23px 1fr 14px; height: 12px; flex: none; align-items: center; border-bottom: 1px solid #c4c6cc; color: #4b4d52; }
.status button { height: 10px; padding: 0 3px; }
.status .on { justify-content: center; padding: 0; background: #d2d9ef; color: #26272a; font-weight: 700; }
.status .on + .on { border-left: 2px solid #e9eaee; }
.status .layer { display: flex; align-items: center; gap: 4px; }
.status svg { width: 8px; height: 8px; }
.status .auto { gap: 4px; padding-left: 4px; }
.status .pane { padding: 0 3px; }
.cpu { padding-left: 8px; }

.taskbar { display: grid; grid-template-columns: 1fr auto 1fr; height: 26px; flex: none; align-items: center; background: linear-gradient(90deg, #d8d8ea 50%, #d1effb 66%, #d1effb 82%, #d8d8ea 97%); }
.task-center { grid-column: 2; display: flex; align-items: center; height: 26px; }
.start { width: 27px; height: 20px; justify-content: center; }
.start svg { width: 14px; height: 14px; }
.task-search { display: flex; align-items: center; gap: 5px; width: 116px; height: 17px; margin-right: 1px; padding: 0 5px; border-radius: 9px; background: #f4f4fb; border: 1px solid #e4e4f0; font-size: 7px; }
.task-search svg { width: 9px; height: 9px; }
.apps { display: flex; width: 212px; }
.apps button { flex: 1; height: 21px; justify-content: center; border-radius: 3px; }
.apps svg { width: 13px; height: 13px; }
.apps .running { background: radial-gradient(#77797d 1px, transparent 2px) center bottom / 4px 3px no-repeat; }
.apps .alert { background: linear-gradient(#c92c2c, #c92c2c) center bottom / 4px 1px no-repeat, #edb0b0; }
.apps .focused { background: linear-gradient(#1976d2, #1976d2) center bottom / 8px 1px no-repeat, #e8f7fd; }
.tray { display: flex; align-items: center; justify-content: flex-end; gap: 6px; padding-right: 10px; }
.tray svg { width: 9px; height: 9px; }
.clock { flex-direction: column; align-items: flex-end; justify-content: center; line-height: 9px; margin-left: 3px; }
```
